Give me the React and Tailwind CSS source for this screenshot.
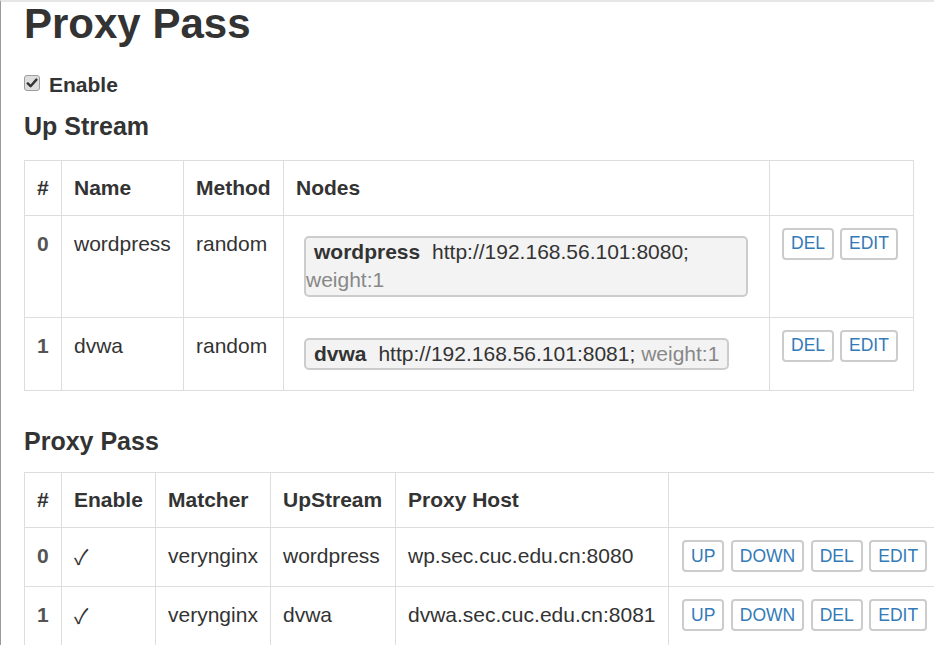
import React from 'react';

const upstreams = [
  { id: 0, name: 'wordpress', method: 'random', node: 'wordpress', addr: 'http://192.168.56.101:8080;', weight: 'weight:1' },
  { id: 1, name: 'dvwa', method: 'random', node: 'dvwa', addr: 'http://192.168.56.101:8081;', weight: 'weight:1' },
];

const proxies = [
  { id: 0, matcher: 'verynginx', upstream: 'wordpress', host: 'wp.sec.cuc.edu.cn:8080' },
  { id: 1, matcher: 'verynginx', upstream: 'dvwa', host: 'dvwa.sec.cuc.edu.cn:8081' },
];

function Btn({ children }) {
  return (
    <span className="inline-flex h-[32px] items-center rounded-[4px] border-2 border-[#cccccc] bg-white px-[7px] text-[17.5px] leading-none text-[#337ab7]">
      {children}
    </span>
  );
}

function Th({ children }) {
  return <th className="border border-[#dddddd] px-3 pt-[12px] pb-[12px] text-left align-bottom font-bold">{children}</th>;
}

function Td({ children, className = '' }) {
  return <td className={'border border-[#dddddd] px-3 pt-[13px] pb-[13px] align-top ' + className}>{children}</td>;
}

export default function App() {
  return (
    <div
      className="h-[645px] w-[934px] overflow-hidden border-t-2 border-l border-t-[#e6e6e6] border-l-[#9a9a9a] bg-white text-[21px] leading-[30px] text-[#333333]"
      style={{ fontFamily: '"Liberation Sans", Arial, sans-serif' }}
    >
      <div className="pl-[23px]">
        <h1 className="text-[42px] font-bold leading-[43px]">Proxy Pass</h1>

        <label className="mt-[24.75px] flex items-start gap-[9px] font-bold">
          <span className="mt-[5px] flex h-[16px] w-[16px] items-center justify-center rounded-[3px] border border-[#9d9d9d] bg-[#dedede]">
            <svg width="12" height="12" viewBox="0 0 12 12">
              <path d="M1.8 6.4 L4.6 9.2 L10.4 2.6" fill="none" stroke="#333" strokeWidth="2.4" strokeLinecap="round" strokeLinejoin="round" />
            </svg>
          </span>
          Enable
        </label>

        <h3 className="mt-[11.5px] text-[25px] font-bold leading-[30px]">Up Stream</h3>

        <table className="mt-[18.7px] w-[889px] table-fixed border-collapse border border-[#dddddd]">
          <colgroup>
            <col className="w-[37px]" />
            <col className="w-[122px]" />
            <col className="w-[100px]" />
            <col className="w-[486px]" />
            <col className="w-[144px]" />
          </colgroup>
          <thead>
            <tr>
              <Th>#</Th>
              <Th>Name</Th>
              <Th>Method</Th>
              <Th>Nodes</Th>
              <Th></Th>
            </tr>
          </thead>
          <tbody>
            {upstreams.map(u => (
              <tr key={u.id}>
                <Td className="font-bold text-[#555555]">{u.id}</Td>
                <Td>{u.name}</Td>
                <Td>{u.method}</Td>
                <td className="border border-[#dddddd] px-3 pt-[14px] pb-[12px] align-top">
                  <div className="flex items-start pt-[6px] pb-[8px]">
                    <div className="ml-2 mr-[9px] rounded-[5px] border-2 border-[#cccccc] bg-[#f3f3f3] pr-2 leading-[28.5px]">
                      <span className="pl-2 pr-[6px] font-bold">{u.node}</span> {u.addr} <span className="text-[#888888]">{u.weight}</span>
                    </div>
                  </div>
                </td>
                <td className="border border-[#dddddd] px-3 pt-[12px] pb-[13px] align-top">
                  <div className="flex gap-[6px]">
                    <Btn>DEL</Btn>
                    <Btn>EDIT</Btn>
                  </div>
                </td>
              </tr>
            ))}
          </tbody>
        </table>

        <h3 className="mt-[34.3px] text-[25px] font-bold leading-[30px]">Proxy Pass</h3>

        <table className="mt-[16.7px] w-[917px] table-fixed border-collapse border border-[#dddddd]">
          <colgroup>
            <col className="w-[37px]" />
            <col className="w-[94px]" />
            <col className="w-[115px]" />
            <col className="w-[125px]" />
            <col className="w-[273px]" />
            <col className="w-[273px]" />
          </colgroup>
          <thead>
            <tr>
              <Th>#</Th>
              <Th>Enable</Th>
              <Th>Matcher</Th>
              <Th>UpStream</Th>
              <Th>Proxy Host</Th>
              <Th></Th>
            </tr>
          </thead>
          <tbody>
            {proxies.map(p => (
              <tr key={p.id}>
                <Td className="font-bold text-[#555555]">{p.id}</Td>
                <Td>
                  <span style={{ fontFamily: '"Noto Sans CJK SC", "DejaVu Sans", sans-serif' }} className="text-[21px] font-normal leading-[30px]">✓</span>
                </Td>
                <Td>{p.matcher}</Td>
                <Td>{p.upstream}</Td>
                <Td className="whitespace-nowrap">{p.host}</Td>
                <td className="border border-[#dddddd] pl-[13px] pr-3 pt-[12px] pb-[13px] align-top">
                  <div className="flex gap-[6.5px]">
                    <Btn>UP</Btn>
                    <Btn>DOWN</Btn>
                    <Btn>DEL</Btn>
                    <Btn>EDIT</Btn>
                  </div>
                </td>
              </tr>
            ))}
          </tbody>
        </table>
      </div>
    </div>
  );
}
